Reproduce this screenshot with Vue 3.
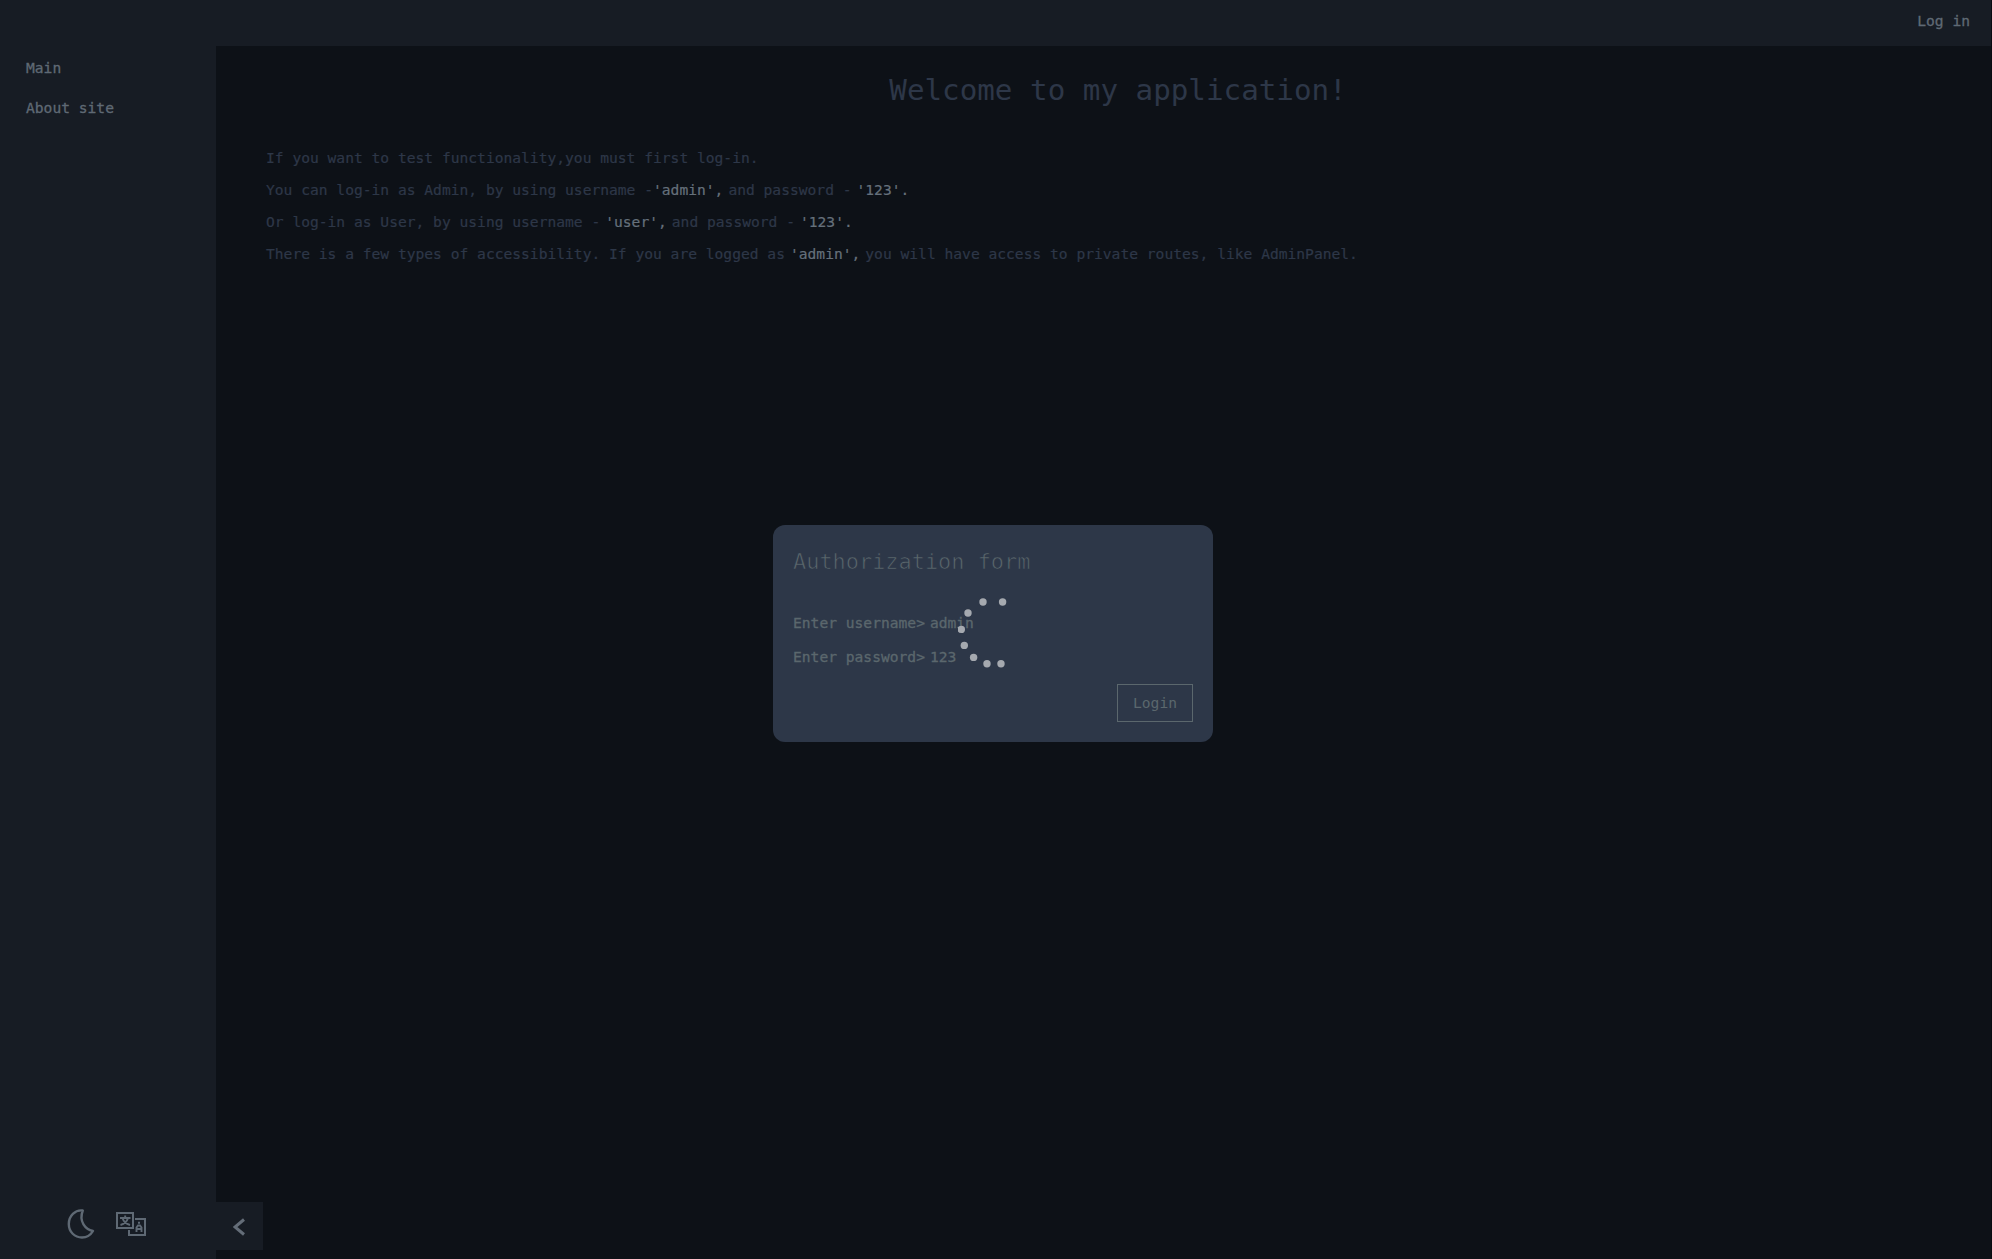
<script setup>
const dots = [
  [22.7, 2.3], [42.3, 2.3], [7.7, 13.3], [1, 29.7],
  [4, 45.7], [13.3, 57.7], [26.7, 64], [40.7, 64],
]
const fields = [
  { label: 'Enter username>', value: 'admin' },
  { label: 'Enter password>', value: '123' },
]
</script>

<template>
  <div class="page">
    <header class="topbar"><a class="link">Log in</a></header>
    <div class="body">
      <nav class="sidebar">
        <div class="links">
          <a class="link">Main</a>
          <a class="link">About site</a>
        </div>
        <div class="tools">
          <svg class="moon" viewBox="0 0 28 32" fill="none" stroke="currentColor" stroke-width="2.400" stroke-linejoin="round">
            <path d="M15.800 2.500C8 1.500 1.800 8 1.800 16c0 8 6 13.500 13.200 13.500 4.600 0 8.600-2.500 11-6.500C18.500 21.500 11.500 13.500 15.800 2.500z" />
          </svg>
          <svg class="lang" viewBox="0 0 30 24" fill="none" stroke="currentColor" stroke-width="2">
            <path d="M1 1h16v15H1zM19 7h10v16H13v-5" />
            <path d="M4 6h10.500M9.200 3.500V6M12 6c-1 3.500-4 6-7.500 7M6.500 6c1 3.500 4 6 7.500 7" stroke-width="1.900" />
            <path d="M20.500 20v-4.500l1.500-2h2l1.500 2V20M20.500 17h5M22 10.700h2" stroke-width="1.900" />
          </svg>
        </div>
        <button class="toggle">
          <svg viewBox="0 0 12 18" fill="none" stroke="currentColor" stroke-width="3"><path d="M11 1.500L2 9l9 7.500" /></svg>
        </button>
      </nav>
      <main class="content">
        <h1>Welcome to my application!</h1>
        <div class="info">
          <p>If you want to test functionality,you must first log-in.</p>
          <p>You can log-in as Admin, by using username -<b class="tight">'admin',</b>and password -<b>'123'.</b></p>
          <p>Or log-in as User, by using username -<b>'user',</b>and password -<b>'123'.</b></p>
          <p>There is a few types of accessibility. If you are logged as<b>'admin',</b>you will have access to private routes, like AdminPanel.</p>
        </div>
      </main>
    </div>
    <div class="overlay">
      <form class="card">
        <h2>Authorization form</h2>
        <div v-for="f in fields" :key="f.label" class="field">
          <label>{{ f.label }}</label><span>{{ f.value }}</span>
        </div>
        <button type="button" class="login">Login</button>
        <svg class="loader" viewBox="0 0 70 70">
          <circle v-for="(d, i) in dots" :key="i" :cx="d[0] + 2.300" :cy="d[1] + 1.700" r="3.700" />
        </svg>
      </form>
    </div>
  </div>
</template>

<style>
html, body { margin: 0; background: #0d1117; overflow: hidden; }
</style>

<style scoped>
* { box-sizing: border-box; }
.page {
  width: 100%;
  height: 1259px;
  display: flex;
  flex-direction: column;
  background: #0d1117;
  color: #5f6974;
  font-family: "DejaVu Sans Mono", monospace;
  font-size: 14.617px;
  line-height: 20px;
  border-right: 1px solid #080b10;
}
.link { -webkit-text-stroke: 0.3px currentColor; }
.topbar {
  height: 46px;
  flex: none;
  background: #171c24;
  display: flex;
  justify-content: flex-end;
  padding: 11px 21px 0 0;
}
.body { flex: 1; display: flex; min-height: 0; }
.sidebar {
  position: relative;
  width: 216px;
  background: #171c24;
  display: flex;
  flex-direction: column;
  justify-content: space-between;
}
.links { display: flex; flex-direction: column; gap: 20px; padding: 12px 0 0 26px; }
.tools { display: flex; align-items: center; gap: 21px; padding: 0 0 19px 67px; }
.moon { width: 28px; height: 32px; }
.lang { width: 30px; height: 24px; }
.toggle {
  position: absolute;
  left: 216px;
  bottom: 9px;
  width: 47px;
  height: 48px;
  border: 0;
  padding: 1px 1px 0 0;
  background: #171c24;
  color: #646d78;
  display: flex;
  align-items: center;
  justify-content: center;
}
.toggle svg { width: 12px; height: 18px; }
.content { flex: 1; padding: 24px 0 0 50px; color: #2d3748; }
h1 {
  margin: 0 23px 0 0;
  padding-left: 2px;
  font-size: 29.235px;
  line-height: 40px;
  font-weight: 400;
  text-align: center;
}
.info { margin-top: 38px; display: flex; flex-direction: column; gap: 12px; -webkit-text-stroke: 0.2px currentColor; }
p { margin: 0; display: flex; white-space: pre; }
b { font-weight: 400; margin: 0 5px; color: #65707b; }
b.tight { margin-left: 0; }
.overlay {
  position: absolute;
  top: 0;
  left: 0;
  width: 1986px;
  height: 1267px;
  display: flex;
  align-items: center;
  justify-content: center;
}
.card {
  position: relative;
  width: 440px;
  height: 217px;
  padding: 21px 20px 20px;
  border-radius: 12px;
  background: #2d3748;
  color: #5b676d;
}
h2 {
  margin: 0 0 35px;
  font-family: "DejaVu Sans Mono", monospace;
  font-weight: 400;
  font-size: 21.926px;
  line-height: 32px;
  -webkit-text-stroke: 0.7px #2d3748;
}
.field { display: flex; gap: 5px; height: 20px; margin-bottom: 14px; -webkit-text-stroke: 0.3px currentColor; }
.login {
  position: absolute;
  right: 20px;
  bottom: 20px;
  width: 76px;
  height: 38px;
  padding: 0;
  border: 1px solid #5b676d;
  background: none;
  color: inherit;
  font: inherit;
}
.loader { position: absolute; left: 185px; top: 73px; width: 70px; height: 70px; fill: #a5a9af; }
</style>
